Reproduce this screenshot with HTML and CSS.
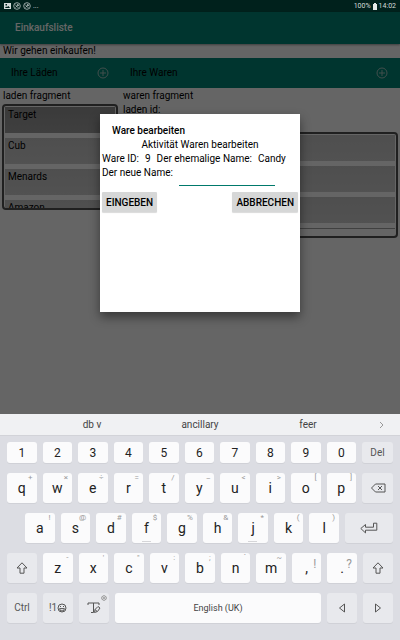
FILE: index.html
```html
<!DOCTYPE html>
<html lang="de">
<head>
<meta charset="utf-8">
<meta name="viewport" content="width=device-width, initial-scale=1">
<title>Einkaufsliste</title>
<link rel="stylesheet" href="styles.css">
</head>
<body>
<div class="status">
  <svg class="status-icon" viewBox="0 0 8 8"><path fill="#d5dbda" fill-rule="evenodd" d="M1 1h7v6H1zM2 6h5L5.500 4 4 5 3 4.500zM2.500 2v1.500H4V2z"/></svg>
  <svg class="status-icon" viewBox="0 0 8 8" fill="none" stroke="#b9c3c1" stroke-width=".8"><circle cx="4" cy="4" r="3.300"/><path d="M2 2.500l3.500 3.500M2.500 5.500L5.500 2.500M4 2l2 2"/></svg>
  <svg class="status-icon" viewBox="0 0 8 8" fill="none" stroke="#b9c3c1" stroke-width=".8"><circle cx="4" cy="4" r="3.300"/><path d="M2 2.500l3.500 3.500M2.500 5.500L5.500 2.500M4 2l2 2"/></svg>
  <span>...</span>
  <span class="status-right">100%</span>
  <svg class="battery" viewBox="0 0 4 7"><path fill="#e4e8e7" d="M1 0h2v1h1v6H0V1h1z"/></svg>
  <span>14:02</span>
</div>
<main class="app">
  <header class="appbar"><h1>Einkaufsliste</h1></header>
  <p class="line">Wir gehen einkaufen!</p>
  <div class="columns">
    <section>
      <div class="toolbar"><h2>Ihre Läden</h2><button class="add" aria-label="Laden hinzufügen"><svg viewBox="0 0 12 12"><circle cx="6" cy="6" r="5"/><path d="M6 3v6M3 6h6"/></svg></button></div>
      <p class="line">laden fragment</p>
      <ul class="list stores"><li class="selected">Target</li><li>Cub</li><li>Menards</li><li>Amazon</li></ul>
    </section>
    <section>
      <div class="toolbar"><h2>Ihre Waren</h2><button class="add" aria-label="Ware hinzufügen"><svg viewBox="0 0 12 12"><circle cx="6" cy="6" r="5"/><path d="M6 3v6M3 6h6"/></svg></button></div>
      <p class="line">waren fragment</p>
      <p class="line">laden id:</p>
      <ul class="list goods"><li></li><li></li><li></li><li class="rule"></li></ul>
    </section>
  </div>
  <div class="scrim">
    <form class="dialog" role="dialog" aria-labelledby="dialog-title">
      <h2 id="dialog-title">Ware bearbeiten</h2>
      <p class="center">Aktivität Waren bearbeiten</p>
      <p class="fields"><span>Ware ID:</span><span>9</span><span>Der ehemalige Name:</span><span>Candy</span></p>
      <div class="field"><label for="name">Der neue Name:</label><input id="name" type="text"></div>
      <div class="actions"><button type="button">EINGEBEN</button><button type="button">ABBRECHEN</button></div>
    </form>
  </div>
</main>
<div class="keyboard">
  <div class="suggest"><button>db v</button><button>ancillary</button><button>feer</button><button class="more" aria-label="Mehr"><svg viewBox="0 0 5 8"><path d="M1 1l3 3-3 3"/></svg></button></div>
  <div class="keys">
    <div class="row numbers"><button>1</button><button>2</button><button>3</button><button>4</button><button>5</button><button>6</button><button>7</button><button>8</button><button>9</button><button>0</button><button class="fn">Del</button></div>
    <div class="row top"><button>q<sup>+</sup></button><button>w<sup>×</sup></button><button>e<sup>÷</sup></button><button>r<sup>=</sup></button><button>t<sup>/</sup></button><button>y<sup class="low">_</sup></button><button>u<sup>&lt;</sup></button><button>i<sup>&gt;</sup></button><button>o<sup>[</sup></button><button>p<sup>]</sup></button><button class="fn" aria-label="Löschen"><svg class="wide" viewBox="0 0 16 12"><path d="M5.500 2H15v8H5.500L1.500 6zM8 4l4 4M12 4L8 8"/></svg></button></div>
    <div class="row home"><button>a<sup>!</sup></button><button>s<sup>@</sup></button><button>d<sup>#</sup></button><button class="bump">f<sup>$</sup></button><button>g<sup>%</sup></button><button>h<sup>&amp;</sup></button><button class="bump">j<sup>*</sup></button><button>k<sup>(</sup></button><button>l<sup>)</sup></button><button class="fn" aria-label="Eingabe"><svg class="enter" viewBox="0 0 18 12"><path d="M.8 6.500L5.500 2.500v2.700h8V1.200h3.300v7H5.500v2.700z"/></svg></button></div>
    <div class="row bottom"><button class="fn" aria-label="Umschalt"><svg viewBox="0 0 12 12"><path d="M6 .8L11 6H8v5.200H4V6H1z"/></svg></button><button>z<sup>-</sup></button><button>x<sup>'</sup></button><button>c<sup>"</sup></button><button>v<sup>:</sup></button><button>b<sup>;</sup></button><button>n<sup>`</sup></button><button>m<sup>~</sup></button><button class="punct">,<sup>!</sup></button><button class="punct">.<sup>?</sup></button><button class="fn" aria-label="Umschalt"><svg viewBox="0 0 12 12"><path d="M6 .8L11 6H8v5.200H4V6H1z"/></svg></button></div>
    <div class="row space"><button class="fn">Ctrl</button><button class="fn">!1<svg class="smile" viewBox="0 0 10 10"><circle cx="5" cy="5" r="4"/><path d="M2.600 5.600a2.400 2.400 0 0 0 4.800 0zM3.500 3v1M6.500 3v1"/></svg></button><button class="fn" aria-label="Handschrift"><svg class="pen" viewBox="0 0 14 12"><path d="M1 3V1h11v2M6.500 1v9.500H4M7.500 10.500l.5-3L11 4.500l2 1.500-2.500 3.500zM8 7.500l2 1.800"/></svg><svg class="gear" viewBox="0 0 6 6"><path d="M3 .5L5.200 1.800v2.400L3 5.500.8 4.200V1.800z"/><circle cx="3" cy="3" r=".8"/></svg></button><button class="spacebar">English (UK)</button><button class="fn" aria-label="Links"><svg viewBox="0 0 12 12"><path d="M8.500 2v8L3.500 6z"/></svg></button><button class="fn" aria-label="Rechts"><svg viewBox="0 0 12 12"><path d="M3.500 2v8l5-4z"/></svg></button></div>
  </div>
</div>
</body>
</html>
```
FILE: styles.css
```css
* { box-sizing: border-box; margin: 0; padding: 0; }
body { min-height: 100vh; display: flex; flex-direction: column; font: 10px/14px Roboto, sans-serif; color: #000; background: #dcdde3; }
button, input { font: inherit; color: inherit; border: 0; background: none; }
h1, h2 { font-size: 10px; font-weight: 400; }
svg { display: block; fill: none; stroke-linejoin: round; }

.status { display: flex; align-items: center; gap: 2px; height: 12px; padding: 0 4px 0 3px; background: #00211c; color: #d5dbda; font-size: 7px; line-height: 12px; }
.status-icon { width: 8px; height: 8px; }
.status-right { margin-left: auto; }
.battery { width: 4px; height: 7px; }

.app { position: relative; flex: 1; background: #fcfcfc; }
.appbar { height: 32px; padding: 9px 15px; background: #008575; box-shadow: 0 1px 2px rgba(0, 0, 0, .4); }
.appbar h1 { color: #fff; font-weight: 500; }
.line { padding: 0 3px; }
.columns { display: grid; grid-template-columns: 3fr 7fr; }
.toolbar { display: flex; align-items: center; justify-content: space-between; height: 30px; padding: 0 11px; background: #008575; }
.toolbar + .line { margin-top: 1px; }
.columns section:last-child .toolbar { padding-right: 12px; padding-left: 10px; }
.add svg { width: 12px; height: 12px; stroke: #a4c4c0; }
.list { list-style: none; display: flex; flex-direction: column; gap: 5px; height: 106px; overflow: hidden; margin: 1px 2px 0; padding: 1px 1px 0; border: 2px solid #505050; border-radius: 4px; }
.list li { flex: none; height: 26px; padding: 1px 3px 0; background: linear-gradient(#c4c4c4, #cccccc); }
.list .selected { background: linear-gradient(#929292, #9e9e9e); }
.goods { margin-top: 15px; }
.list .rule { height: 1px; background: #a0a0a0; }

.scrim { position: absolute; inset: 0; display: flex; justify-content: center; align-items: flex-start; padding-top: 102px; background: rgba(0, 0, 0, .6); }
.dialog { width: 50%; min-height: 198px; padding: 10px 2px; background: #fff; box-shadow: 0 5px 10px rgba(0, 0, 0, .45); }
.dialog h2 { padding: 0 10px; font-weight: 500; }
.center { text-align: center; }
.fields { display: flex; gap: 6px; white-space: nowrap; }
.field { display: flex; gap: 6px; }
.field input { width: 96px; height: 20px; border-bottom: 1px solid #00796b; outline: 0; }
.actions { display: flex; justify-content: space-between; margin-top: 6px; }
.actions button { height: 20px; padding: 1px 4px 0; background: #d6d7d7; border-radius: 1px; font-weight: 500; box-shadow: 0 1px 1px rgba(0, 0, 0, .15); }

.keyboard { background: #dcdde3; color: #222; }
.suggest { display: grid; grid-template-columns: 1fr 1fr 1fr 38px; height: 22px; padding: 1px 0 0 38px; background: #f0f1f3; border-bottom: 1px solid #d2d3d8; color: #444; }
.more svg { width: 5px; height: 8px; margin: auto; stroke: #999; }
.keys { display: grid; gap: 10px; padding: 6px 7px 17px; }
.row { display: grid; gap: 6px; height: 30px; }
.numbers { height: 21px; font-size: 12px; }
.numbers, .top { grid-template-columns: repeat(10, 1fr) 31px; }
.home { grid-template-columns: repeat(9, 1fr) 48px; padding-left: 18px; }
.bottom { grid-template-columns: 30px repeat(9, 1fr) 30px; }
.space { grid-template-columns: repeat(3, 30px) 1fr repeat(2, 30px); }
.row button { position: relative; display: flex; align-items: center; justify-content: center; background: #fbfbfc; border-radius: 3px; box-shadow: 0 1px 0 #d0d1d7; }
.top, .home, .bottom { font-size: 14px; }
.row .fn { background: #e8e9ed; color: #555; font-size: 10px; }
.row sup { position: absolute; top: 1px; right: 4px; color: #999; font-size: 8px; line-height: 8px; }
.row .low { top: -1px; }
.row .punct sup { top: 4px; right: 5px; font-size: 12px; line-height: 14px; }
.bump::after { content: ""; position: absolute; bottom: 1px; left: 10px; width: 9px; height: 1px; background: #d5d5d8; }
.row svg { width: 12px; height: 12px; stroke: #555; }
.row .wide { width: 16px; }
.row .enter { width: 18px; }
.row .smile { width: 10px; height: 10px; }
.row .pen { width: 14px; }
.row .gear { position: absolute; top: 2px; right: 2px; width: 6px; height: 6px; stroke: #999; }
.row .spacebar { color: #444; font-size: 9px; }
```
